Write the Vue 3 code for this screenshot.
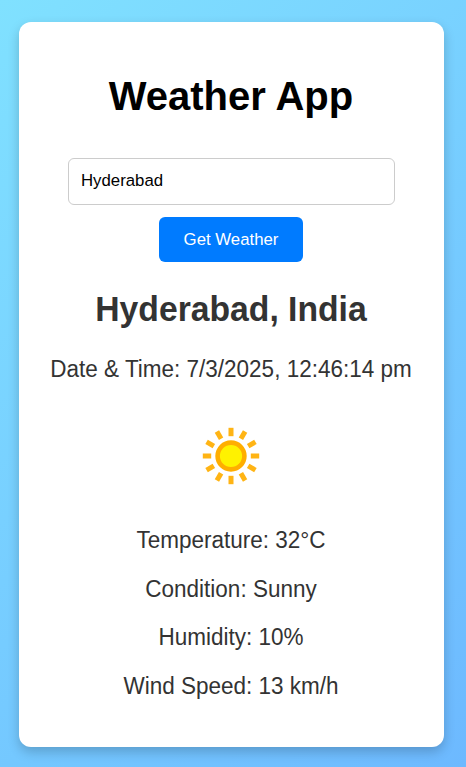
<script setup>
import { ref } from 'vue'

const city = ref('Hyderabad')
const details = ['Temperature: 32°C', 'Condition: Sunny', 'Humidity: 10%', 'Wind Speed: 13 km/h']
const rays = Array.from({ length: 12 }, (_, i) => i * 30)
</script>

<template>
  <div class="page">
    <main class="card">
      <h1 class="title">Weather App</h1>
      <input v-model="city" class="city" type="text" />
      <button class="submit">Get Weather</button>
      <h2 class="place">Hyderabad, India</h2>
      <p class="line date">Date &amp; Time: 7/3/2025, 12:46:14 pm</p>
      <svg class="sun" viewBox="0 0 78 78">
        <rect
          v-for="angle in rays"
          :key="angle"
          x="36.5"
          y="10.8"
          width="5"
          height="8.4"
          fill="#ffb414"
          :transform="`rotate(${angle} 39 39)`"
        />
        <circle cx="39" cy="39" r="13.4" fill="#fff200" stroke="#ffae00" stroke-width="4.6" />
      </svg>
      <p v-for="d in details" :key="d" class="line">{{ d }}</p>
    </main>
  </div>
</template>

<style>
body {
  margin: 0;
  overflow: hidden;
}
</style>

<style scoped>
.page {
  box-sizing: border-box;
  height: 767px;
  padding: 22px 22px 20px 19px;
  background: linear-gradient(135deg, #80e1ff, #6db9ff);
  font-family: "Liberation Sans", Arial, sans-serif;
}
.card {
  box-sizing: border-box;
  display: flex;
  flex-direction: column;
  align-items: center;
  height: 725px;
  padding: 51px 1px 0 0;
  border-radius: 12px;
  background: #fff;
  box-shadow: 0 5px 12px rgba(0, 0, 0, 0.2);
}
.title {
  margin: 0;
  font-size: 40px;
  line-height: 46px;
  white-space: nowrap;
  color: #000;
  transform: scaleY(1.03);
}
.city {
  box-sizing: border-box;
  width: 327px;
  height: 47px;
  margin: 39px 0 0 1px;
  padding: 0 12px 2px;
  border: 1px solid #ccc;
  border-radius: 6px;
  outline: none;
  background: #fff;
  color: #000;
  font: 16.8px "Liberation Sans", Arial, sans-serif;
}
.submit {
  width: 144px;
  height: 45px;
  margin: 12px 0 0;
  padding: 0;
  border: 0;
  border-radius: 6px;
  background: #007bff;
  color: #fff;
  font: 16.8px "Liberation Sans", Arial, sans-serif;
}
.place {
  margin: 26px 0 0;
  font-size: 33.7px;
  line-height: 40px;
  white-space: nowrap;
  color: #333;
  transform: scaleY(1.06);
}
.line {
  margin: 0;
  font-size: 22.5px;
  line-height: 48.7px;
  white-space: nowrap;
  color: #333;
  transform: scaleY(1.07);
}
.date {
  margin-top: 18px;
}
.sun {
  width: 78px;
  height: 78px;
  margin: 22px 0 22.3px;
}
</style>
